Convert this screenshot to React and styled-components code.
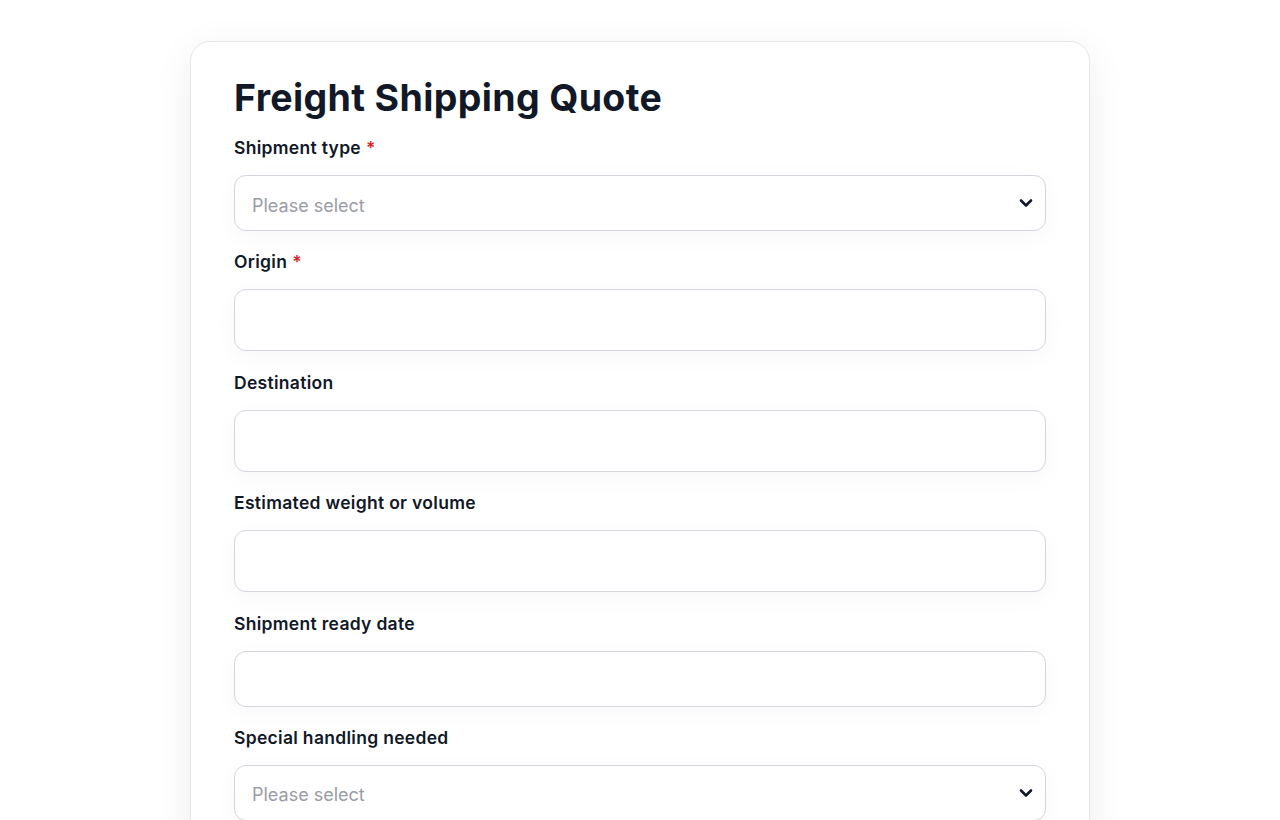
import React from "react";
import styled, { createGlobalStyle } from "styled-components";

const Global = createGlobalStyle`
  html, body { margin: 0; padding: 0; background: #ffffff; }
  body { font-family: Inter, "Noto Sans", "Liberation Sans", sans-serif; color: #111827; }
  * { box-sizing: border-box; }
`;

const Page = styled.div`
  padding-top: 41px;
  display: flex;
  justify-content: center;
`;

const Card = styled.form`
  width: 900px;
  background: #ffffff;
  border: 1px solid #e6e7eb;
  border-radius: 20px;
  box-shadow: 0 10px 40px rgba(17, 24, 39, 0.07);
  padding: 32px 43px 40px;
  display: flex;
  flex-direction: column;
`;

const Title = styled.h1`
  margin: 0 0 14px;
  font-size: 37.5px;
  line-height: 48px;
  font-weight: 700;
  letter-spacing: 0.35px;
  color: #111827;
`;

const Field = styled.div`
  display: flex;
  flex-direction: column;
  margin-bottom: 19.4px;
`;

const Label = styled.label`
  font-size: 17.5px;
  line-height: 24px;
  font-weight: 600;
  letter-spacing: 0.3px;
  color: #111827;
  margin-bottom: 15px;
`;

const Req = styled.span`
  color: #dc2626;
  margin-left: 5px;
`;

const Box = styled.div`
  height: ${(p) => p.$h}px;
  border: 1px solid #d4d5dd;
  border-radius: 12px;
  background: #ffffff;
  box-shadow: 0 6px 24px rgba(17, 24, 39, 0.035);
  display: flex;
  align-items: center;
  padding: 0 17px;
`;

const Placeholder = styled.span`
  font-size: 18px;
  color: #9a9ca5;
  flex: 1;
  padding-top: 4px;
`;

const Chevron = styled.svg`
  width: 14px;
  height: 10px;
  margin-right: -5px;
`;

function Select() {
  return (
    <Box $h={56}>
      <Placeholder>Please select</Placeholder>
      <Chevron viewBox="0 0 14 10">
        <polyline points="2,2.5 7,7.5 12,2.5" fill="none" stroke="#111827" strokeWidth="2.6" strokeLinecap="round" strokeLinejoin="round" />
      </Chevron>
    </Box>
  );
}

export default function App() {
  return (
    <>
      <Global />
      <Page>
        <Card>
          <Title>Freight Shipping Quote</Title>
          <Field>
            <Label>Shipment type<Req>*</Req></Label>
            <Select />
          </Field>
          <Field>
            <Label>Origin<Req>*</Req></Label>
            <Box $h={62} />
          </Field>
          <Field>
            <Label>Destination</Label>
            <Box $h={62} />
          </Field>
          <Field>
            <Label>Estimated weight or volume</Label>
            <Box $h={62} />
          </Field>
          <Field>
            <Label>Shipment ready date</Label>
            <Box $h={56} />
          </Field>
          <Field>
            <Label>Special handling needed</Label>
            <Select />
          </Field>
        </Card>
      </Page>
    </>
  );
}
